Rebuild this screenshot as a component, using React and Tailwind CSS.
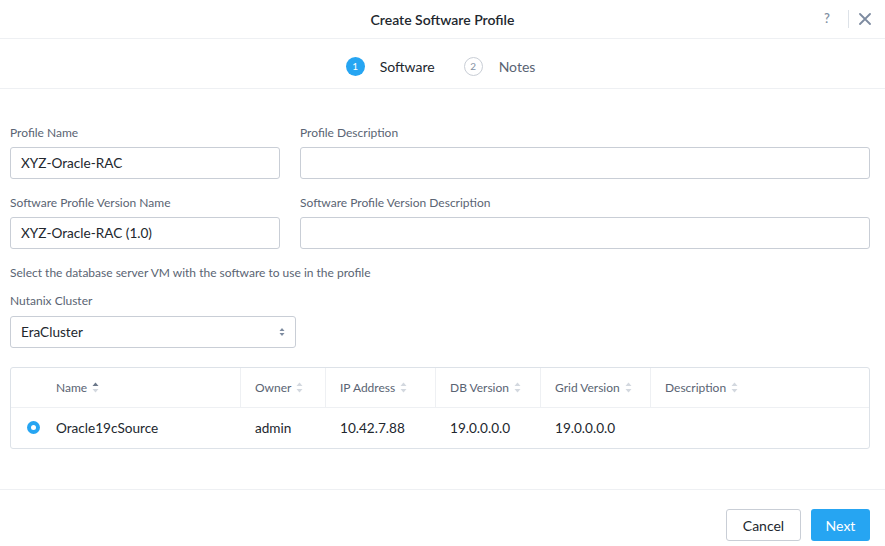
import React from 'react';

function SortIcon({ active }) {
  return (
    <svg width="7" height="11" viewBox="0 0 7 11" className="ml-[5px] inline-block">
      <path d="M3.5 0.5 L6.5 4 L0.5 4 Z" fill={active ? '#6b7789' : '#d3d8df'} />
      <path d="M3.5 10.5 L6.5 7 L0.5 7 Z" fill="#d3d8df" />
    </svg>
  );
}

function Field({ label, value, className = '' }) {
  return (
    <div className={className}>
      <div className="text-[12px] text-[#5a6473] h-[14px] leading-[14px]">{label}</div>
      <div className="mt-[7px] h-[32px] border border-[#c9ced6] rounded-[3px] px-[10px] flex items-center text-[13.6px] text-[#22272e]">
        {value}
      </div>
    </div>
  );
}

export default function App() {
  const cols = [
    { name: 'Name', w: 'w-[230px]', pl: 'pl-[45px]', active: true },
    { name: 'Owner', w: 'w-[85px]', pl: 'pl-[14px]' },
    { name: 'IP Address', w: 'w-[110px]', pl: 'pl-[14px]' },
    { name: 'DB Version', w: 'w-[105px]', pl: 'pl-[14px]' },
    { name: 'Grid Version', w: 'w-[110px]', pl: 'pl-[14px]' },
    { name: 'Description', w: 'flex-1', pl: 'pl-[14px]' },
  ];
  const row = ['Oracle19cSource', 'admin', '10.42.7.88', '19.0.0.0.0', '19.0.0.0.0', ''];

  return (
    <div className="w-[885px] h-[546px] bg-white flex flex-col font-['Lato','Open_Sans',sans-serif] text-[#22272e]">
      {/* Header */}
      <div className="h-[39px] shrink-0 border-b border-[#eef0f3] relative flex items-center justify-center">
        <div className="text-[14px] font-semibold text-[#22272e] pt-[1px]">Create Software Profile</div>
        <div className="absolute right-[12px] top-0 h-full flex items-center">
          <span className="text-[13px] text-[#8391a4] font-semibold w-[26px] text-center">?</span>
          <span className="w-px h-[18px] bg-[#dde2e8] mx-[8px]"></span>
          <svg width="12" height="12" viewBox="0 0 12 12" className="mx-[2px]">
            <path d="M1 1 L11 11 M11 1 L1 11" stroke="#7d8ba0" strokeWidth="1.8" strokeLinecap="round" />
          </svg>
        </div>
      </div>

      {/* Steps */}
      <div className="h-[50px] shrink-0 border-b border-[#eef0f3] flex items-center justify-center pr-[4px] pt-[6px]">
        <div className="flex items-center">
          <span className="w-[19px] h-[19px] rounded-full bg-[#26a5f2] text-white text-[10px] flex items-center justify-center">1</span>
          <span className="ml-[15px] text-[14px] text-[#22272e]">Software</span>
          <span className="ml-[29px] w-[19px] h-[19px] rounded-full border border-[#c9ced6] text-[#8391a4] text-[10px] flex items-center justify-center">2</span>
          <span className="ml-[16px] text-[14px] text-[#5a6473]">Notes</span>
        </div>
      </div>

      {/* Body */}
      <div className="flex-1 px-[10px] pt-[37px]">
        <div className="flex gap-[20px]">
          <Field label="Profile Name" value="XYZ-Oracle-RAC" className="w-[270px]" />
          <Field label="Profile Description" value="" className="flex-1 pr-[5px]" />
        </div>
        <div className="flex gap-[20px] mt-[17px]">
          <Field label="Software Profile Version Name" value="XYZ-Oracle-RAC (1.0)" className="w-[270px]" />
          <Field label="Software Profile Version Description" value="" className="flex-1 pr-[5px]" />
        </div>
        <div className="mt-[17px] text-[12px] text-[#5a6473] h-[14px] leading-[14px]">
          Select the database server VM with the software to use in the profile
        </div>
        <div className="mt-[14px] text-[12px] text-[#5a6473] h-[14px] leading-[14px]">Nutanix Cluster</div>
        <div className="mt-[8px] w-[286px] h-[32px] border border-[#c9ced6] rounded-[3px] px-[10px] flex items-center justify-between text-[13.6px]">
          <span>EraCluster</span>
          <svg width="6" height="10" viewBox="0 0 6 10">
            <path d="M3 1 L5.5 4 L0.5 4 Z" fill="#7d8ba0" />
            <path d="M3 9 L5.5 6 L0.5 6 Z" fill="#7d8ba0" />
          </svg>
        </div>

        {/* Table */}
        <div className="mt-[19px] mr-[5px] border border-[#dde2e8] rounded-[3px]">
          <div className="h-[40px] flex border-b border-[#eef0f3]">
            {cols.map((c, i) => (
              <div
                key={c.name}
                className={`${c.w} ${c.pl} flex items-center text-[12px] text-[#5a6473] ${i < cols.length - 1 ? 'border-r border-[#eef0f3]' : ''}`}
              >
                {c.name}
                <SortIcon active={c.active} />
              </div>
            ))}
          </div>
          <div className="h-[40px] flex items-center">
            {cols.map((c, i) => (
              <div key={c.name} className={`${c.w} ${c.pl} relative flex items-center text-[13.6px] text-[#22272e]`}>
                {i === 0 && (
                  <span className="absolute left-[16px] w-[13px] h-[13px] rounded-full bg-[#26a5f2] flex items-center justify-center">
                    <span className="w-[5px] h-[5px] rounded-full bg-white"></span>
                  </span>
                )}
                {row[i]}
              </div>
            ))}
          </div>
        </div>
      </div>

      {/* Footer */}
      <div className="h-[57px] shrink-0 border-t border-[#eef0f3] flex items-start justify-end gap-[10px] pr-[15px] pt-[19px]">
        <button className="h-[32px] w-[75px] border border-[#c9ced6] rounded-[3px] bg-white text-[14px] text-[#22272e]">Cancel</button>
        <button className="h-[32px] w-[59px] rounded-[3px] bg-[#26a5f2] text-[14px] text-white">Next</button>
      </div>
    </div>
  );
}
